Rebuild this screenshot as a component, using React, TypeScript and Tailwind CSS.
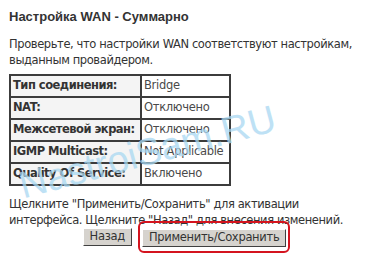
export default function App() {
  const rows: [string, string][] = [
    ["Тип соединения:", "Bridge"],
    ["NAT:", "Отключено"],
    ["Межсетевой экран:", "Отключено"],
    ["IGMP Multicast:", "Not Applicable"],
    ["Quality Of Service:", "Включено"],
  ];

  const btn =
    "h-[18px] px-[6px] bg-[#d6d3ce] text-[11.5px] tracking-[-0.3px] text-[#333] leading-none border border-t-white border-l-white border-r-[#404040] border-b-[#404040]";

  return (
    <div
      className="relative w-[379px] h-[267px] overflow-hidden bg-white text-[#333] px-[9px] pt-[9px]"
      style={{ fontFamily: '"DejaVu Sans", Tahoma, sans-serif' }}
    >
      {/* Title */}
      <h1
        className="text-[13px] font-bold leading-[16px] text-[#333]"
        style={{ fontFamily: '"Liberation Sans", Arial, sans-serif' }}
      >
        Настройка WAN - Суммарно
      </h1>

      <p className="mt-[11px] text-[11.5px] leading-[16px] tracking-[-0.4px]">
        Проверьте, что настройки WAN соответствуют настройкам, выданным провайдером.
      </p>

      {/* Summary table */}
      <table className="mt-[6px] w-[222px] table-fixed border-collapse border-2 border-[#3c3c3c] text-[11.5px]">
        <tbody>
          {rows.map(([k, v]) => (
            <tr key={k} className="h-[22px]">
              <td className="w-[131px] border-2 border-[#3c3c3c] bg-[#f4f4f4] px-[2px] font-bold tracking-[-0.5px] text-[#333] whitespace-nowrap overflow-hidden">
                {k}
              </td>
              <td className="border-2 border-[#3c3c3c] bg-white px-[2px] text-[#4a4a4a] tracking-[-0.3px] whitespace-nowrap overflow-hidden">
                {v}
              </td>
            </tr>
          ))}
        </tbody>
      </table>

      <p className="mt-[10px] text-[11.5px] leading-[16px] tracking-[-0.4px]">
        Щелкните "Применить/Сохранить" для активации интерфейса. Щелкните "Назад" для внесения изменений.
      </p>

      {/* Buttons */}
      <div className="flex justify-center items-center gap-[6px] -mt-[7px] pr-[6px]">
        <button className={btn}>Назад</button>
        <div className="rounded-[6px] border-2 border-[#d4141f] pt-[1px] pb-[3px] px-[2px]">
          <button className={btn}>Применить/Сохранить</button>
        </div>
      </div>

      {/* Watermark */}
      <div
        className="pointer-events-none absolute left-[20px] top-[164px] -rotate-[15deg] origin-left text-[38px] leading-[44px] text-[#a9d8f2] opacity-75 whitespace-nowrap"
        style={{ fontFamily: '"Liberation Sans", Arial, sans-serif' }}
      >
        NastroiSam.RU
      </div>
    </div>
  );
}
